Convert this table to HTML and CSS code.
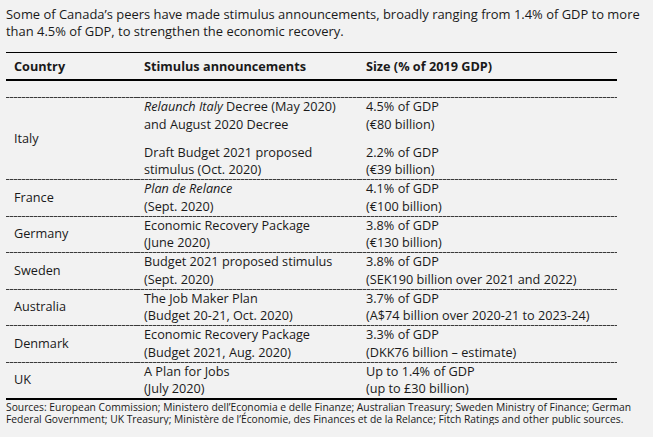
FILE: index.html
```html
<!DOCTYPE html>
<html>
<head>
<meta charset="utf-8">
<link rel="stylesheet" href="styles.css">
</head>
<body>
<div class="page">
  <p class="intro">Some of Canada’s peers have made stimulus announcements, broadly ranging from 1.4% of GDP to more than 4.5% of GDP, to strengthen the economic recovery.</p>
  <table class="stim">
    <colgroup><col class="c1"><col class="c2"><col class="c3"></colgroup>
    <thead>
      <tr><th>Country</th><th>Stimulus announcements</th><th>Size (% of 2019 GDP)</th></tr>
    </thead>
    <tbody>
      <tr class="gap"><td class="sep"></td><td class="sep"></td><td class="sep"></td></tr>
      <tr class="sub1">
        <td rowspan="2" class="country sep">Italy</td>
        <td><i>Relaunch Italy</i> Decree (May 2020)<br>and August 2020 Decree</td>
        <td>4.5% of GDP<br>(€80 billion)</td>
      </tr>
      <tr>
        <td class="sep">Draft Budget 2021 proposed<br>stimulus (Oct. 2020)</td>
        <td class="sep">2.2% of GDP<br>(€39 billion)</td>
      </tr>
      <tr>
        <td class="country sep">France</td>
        <td class="sep"><i>Plan de Relance</i><br>(Sept. 2020)</td>
        <td class="sep">4.1% of GDP<br>(€100 billion)</td>
      </tr>
      <tr>
        <td class="country sep">Germany</td>
        <td class="sep">Economic Recovery Package<br>(June 2020)</td>
        <td class="sep">3.8% of GDP<br>(€130 billion)</td>
      </tr>
      <tr>
        <td class="country sep">Sweden</td>
        <td class="sep">Budget 2021 proposed stimulus<br>(Sept. 2020)</td>
        <td class="sep">3.8% of GDP<br>(SEK190 billion over 2021 and 2022)</td>
      </tr>
      <tr>
        <td class="country sep">Australia</td>
        <td class="sep">The Job Maker Plan<br>(Budget 20-21, Oct. 2020)</td>
        <td class="sep">3.7% of GDP<br>(A$74 billion over 2020-21 to 2023-24)</td>
      </tr>
      <tr>
        <td class="country sep">Denmark</td>
        <td class="sep">Economic Recovery Package<br>(Budget 2021, Aug. 2020)</td>
        <td class="sep">3.3% of GDP<br>(DKK76 billion – estimate)</td>
      </tr>
      <tr class="last">
        <td class="country">UK</td>
        <td>A Plan for Jobs<br>(July 2020)</td>
        <td>Up to 1.4% of GDP<br>(up to £30 billion)</td>
      </tr>
    </tbody>
  </table>
  <p class="sources">Sources: European Commission; Ministero dell’Economia e delle Finanze; Australian Treasury; Sweden Ministry of Finance; German Federal Government; UK Treasury; Ministère de l’Économie, des Finances et de la Relance; Fitch Ratings and other public sources.</p>
</div>
</body>
</html>
```
FILE: styles.css
```css
html, body {
  margin: 0;
  padding: 0;
  background: #f2f2f2;
}
body {
  font-family: "Open Sans", "Noto Sans", "Liberation Sans", sans-serif;
  color: #1a1a1a;
}
.page {
  padding: 6px 0 0 6px;
  width: 611px;
}
.intro {
  margin: 0 0 12px 0;
  font-size: 12.95px;
  line-height: 17px;
  width: 640px;
}
.stim {
  border-collapse: collapse;
  width: 611px;
  table-layout: fixed;
  font-size: 12.7px;
  line-height: 17.75px;
}
.c1 { width: 131px; }
.c2 { width: 222px; }
.c3 { width: 258px; }
.stim th {
  text-align: left;
  font-weight: 700;
  padding: 4px 0 4px 7px;
  line-height: 18px;
  border-top: 1px solid #000;
  border-bottom: 2px solid #000;
}
.stim th:first-child { padding-left: 8px; }
.stim td {
  padding: 0 0 0 7px;
  vertical-align: top;
  white-space: nowrap;
}
.stim td.country {
  padding-left: 8px;
  vertical-align: middle;
}
.stim td.sep {
  padding-bottom: 1px;
  background-image: repeating-linear-gradient(90deg, #3a3a3a 0 3px, #9a9a9a 3px 4px);
  background-size: 100% 1px;
  background-position: left bottom;
  background-repeat: no-repeat;
}
.stim tr.gap td { height: 16px; padding: 0 0 1px 0; }
.stim tr.sub1 td { padding-bottom: 10px; }
.stim tr.sub1 td.country { padding-bottom: 1px; }
.stim tr.last td { border-bottom: 2px solid #000; }
.sources {
  margin: 2px 0 0 0;
  font-size: 10.3px;
  line-height: 11.5px;
  width: 640px;
}
```
